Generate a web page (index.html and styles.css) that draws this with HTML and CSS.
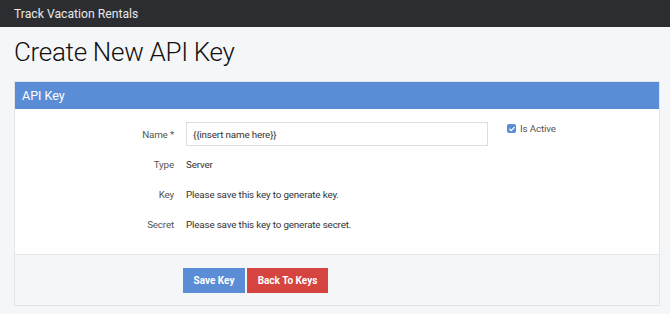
FILE: index.html
```html
<!DOCTYPE html>
<html lang="en">
<head>
    <meta charset="UTF-8">
    <meta name="viewport" content="width=device-width, initial-scale=1.0">
    <title>Create New API Key - Track Vacation Rentals</title>
    <link rel="stylesheet" href="styles.css">
</head>
<body>
    <nav class="navbar">
        <span class="brand">Track Vacation Rentals</span>
    </nav>
    <div class="container">
        <h1>Create New API Key</h1>
        <div class="card">
            <div class="card-header">API Key</div>
            <form id="key-form">
                <div class="card-body">
                    <div class="form-row">
                        <label for="name">Name *</label>
                        <input type="text" id="name" name="name" value="{{insert name here}}">
                        <label class="check">
                            <input type="checkbox" name="is_active" checked>
                            <span class="box">
                                <svg width="8" height="8" viewBox="0 0 8 8"><path d="M1.8 4.2 L3.3 5.6 L6.2 2.4" fill="none" stroke="#fff" stroke-width="1.3" stroke-linecap="round" stroke-linejoin="round"/></svg>
                            </span>
                            Is Active
                        </label>
                    </div>
                    <div class="form-row">
                        <span class="label">Type</span>
                        <span class="value">Server</span>
                    </div>
                    <div class="form-row">
                        <span class="label">Key</span>
                        <span class="value">Please save this key to generate key.</span>
                    </div>
                    <div class="form-row">
                        <span class="label">Secret</span>
                        <span class="value">Please save this key to generate secret.</span>
                    </div>
                </div>
                <div class="card-footer">
                    <button type="submit" class="btn btn-primary">Save Key</button>
                    <button type="button" class="btn btn-danger">Back To Keys</button>
                </div>
            </form>
        </div>
    </div>
</body>
</html>
```

FILE: styles.css
```css
body {
    margin: 0;
    padding: 0;
    font-family: Roboto, "Liberation Sans", Arial, sans-serif;
    background: #f5f6f8;
    color: #333;
}

.navbar {
    height: 27px;
    background: #2c2d31;
    display: flex;
    align-items: center;
    padding: 0 14px;
}

.brand {
    color: #e8e8ea;
    font-size: 12.2px;
}

.container {
    padding: 0 10px 0 14px;
}

h1 {
    margin: 10px 0 14px;
    font-size: 26px;
    font-weight: 300;
    color: #111;
    line-height: 30px;
    letter-spacing: -0.3px;
}

.card {
    background: #fff;
    border: 1px solid #e3e4e7;
}

.card-header {
    background: #5b8dd6;
    color: #fff;
    font-size: 12.5px;
    height: 27px;
    line-height: 27px;
    padding: 0 7px;
}

.card-body {
    padding: 10px 0 15px;
}

.form-row {
    display: flex;
    align-items: center;
    height: 30px;
    font-size: 9.8px;
    letter-spacing: -0.15px;
}

.form-row label,
.form-row .label {
    width: 159px;
    text-align: right;
    padding-right: 12px;
    color: #555;
}

.form-row .value {
    color: #333;
}

.form-row input[type="text"] {
    width: 302px;
    height: 24px;
    box-sizing: border-box;
    border: 1px solid #dcdde0;
    padding: 0 6px;
    font-family: inherit;
    font-size: 9.8px;
    letter-spacing: -0.15px;
    color: #333;
}

.check {
    display: flex;
    align-items: center;
    align-self: flex-start;
    gap: 4px;
    margin-left: 19px;
    padding-top: 4px;
    width: auto !important;
    text-align: left !important;
}

.check input {
    display: none;
}

.check .box {
    width: 9px;
    height: 9px;
    border-radius: 2px;
    background: #5b8dd6;
    display: flex;
    align-items: center;
    justify-content: center;
}

.card-footer {
    background: #f5f6f8;
    border-top: 1px solid #e6e7ea;
    padding: 13px 0 12px 168px;
    display: flex;
    gap: 2px;
}

.btn {
    height: 25px;
    border: none;
    color: #fff;
    font-family: inherit;
    font-weight: bold;
    font-size: 10px;
    padding: 0;
    white-space: nowrap;
    cursor: pointer;
}

.btn-primary {
    background: #5b8dd6;
    width: 62px;
}

.btn-danger {
    background: #d5443f;
    width: 81px;
}
```
